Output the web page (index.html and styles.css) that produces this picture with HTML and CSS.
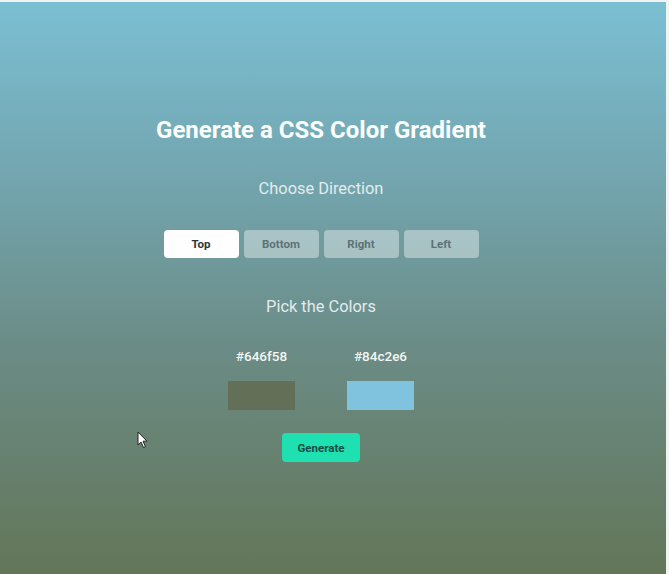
FILE: index.html
```html
<!DOCTYPE html>
<html>
<head>
<meta charset="utf-8">
<link rel="stylesheet" href="styles.css">
</head>
<body>
<div class="page">
  <h1 class="title">Generate a CSS Color Gradient</h1>
  <h2 class="subtitle">Choose Direction</h2>
  <div class="directions">
    <button class="dir active">Top</button>
    <button class="dir">Bottom</button>
    <button class="dir">Right</button>
    <button class="dir">Left</button>
  </div>
  <h2 class="subtitle colors-title">Pick the Colors</h2>
  <div class="pickers">
    <div class="picker">
      <span class="hex">#646f58</span>
      <div class="swatch swatch-a"></div>
    </div>
    <div class="picker">
      <span class="hex">#84c2e6</span>
      <div class="swatch swatch-b"></div>
    </div>
  </div>
  <button class="generate">Generate</button>
  <svg class="cursor" width="12" height="18" viewBox="0 0 12 18">
    <path d="M1 1 L1 14 L4 11 L6.5 16.5 L8.5 15.6 L6 10.2 L10 10.2 Z" fill="#fff" stroke="#222" stroke-width="1"/>
  </svg>
</div>
</body>
</html>
```

FILE: styles.css
```css
html, body {
  margin: 0;
  padding: 0;
  background: #f2f4f4;
}
body {
  width: 669px;
  height: 574px;
  overflow: hidden;
  font-family: Roboto, "Noto Sans", sans-serif;
}
.page {
  position: relative;
  margin-top: 2px;
  width: 666px;
  height: 572px;
  background: linear-gradient(to bottom, #7bbfd3 0%, #73a6b0 30%, #6b8c86 60%, #637658 100%);
  display: flex;
  flex-direction: column;
  align-items: center;
  box-sizing: border-box;
  padding-top: 113px;
  padding-right: 24px;
}
.title {
  margin: 0;
  font-size: 24px;
  font-weight: 700;
  color: #fbfdfd;
  line-height: 30px;
}
.subtitle {
  margin: 34px 0 0;
  font-size: 16.4px;
  font-weight: 400;
  color: #e3ebed;
  line-height: 20px;
}
.directions {
  display: flex;
  gap: 5px;
  margin-top: 31px;
}
.dir {
  width: 75px;
  height: 28px;
  border: none;
  border-radius: 4px;
  background: rgba(255,255,255,0.4);
  color: #5d7276;
  font-family: Roboto, sans-serif;
  font-weight: 700;
  font-size: 11.5px;
  padding: 0;
}
.dir.active {
  background: #fefefe;
  color: #2f3536;
}
.colors-title {
  margin-top: 39px;
}
.pickers {
  display: flex;
  gap: 52px;
  margin-top: 31px;
}
.picker {
  display: flex;
  flex-direction: column;
  align-items: center;
  width: 67px;
}
.hex {
  font-size: 13.5px;
  font-weight: 500;
  color: #f3f6f4;
  line-height: 16px;
}
.swatch {
  margin-top: 17px;
  width: 67px;
  height: 29px;
}
.swatch-a { background: #646f58; }
.swatch-b { background: #7fc3df; }
.generate {
  margin-top: 23px;
  width: 78px;
  height: 29px;
  border: none;
  border-radius: 4px;
  background: #1ee0b1;
  color: #174c42;
  font-family: Roboto, sans-serif;
  font-weight: 700;
  font-size: 11.5px;
  padding: 0;
}
.cursor {
  position: absolute;
  left: 137px;
  top: 429px;
}
```
